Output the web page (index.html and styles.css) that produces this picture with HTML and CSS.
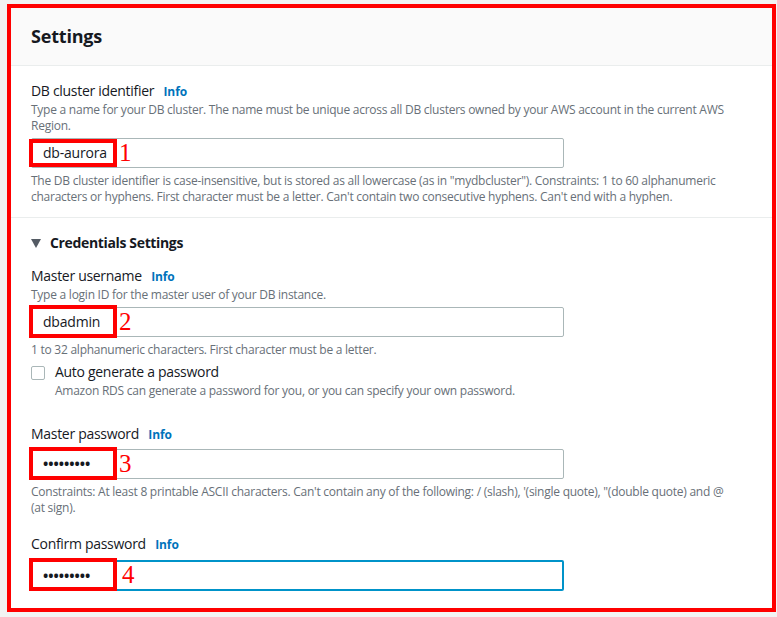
FILE: index.html
```html
<!DOCTYPE html>
<html>
<head>
<meta charset="utf-8">
<link rel="stylesheet" href="styles.css">
</head>
<body>
<div class="frame">
  <div class="card">
    <div class="card-header"><h2 class="title">Settings</h2></div>
    <div class="section">
      <div class="field">
        <div class="label">DB cluster identifier <a class="info">Info</a></div>
        <div class="desc">Type a name for your DB cluster. The name must be unique across all DB clusters owned by your AWS account in the current AWS Region.</div>
        <div class="input-wrap">
          <div class="input">db-aurora</div>
          <div class="mark mark-1"></div>
          <span class="num">1</span>
        </div>
        <div class="hint">The DB cluster identifier is case-insensitive, but is stored as all lowercase (as in "mydbcluster"). Constraints: 1 to 60 alphanumeric characters or hyphens. First character must be a letter. Can't contain two consecutive hyphens. Can't end with a hyphen.</div>
      </div>
    </div>
    <div class="section section-cred">
      <div class="expander">
        <svg class="caret" width="10" height="9" viewBox="0 0 10 9"><polygon points="0,0 10,0 5,9" fill="#545b64"/></svg>
        <span>Credentials Settings</span>
      </div>
      <div class="field">
        <div class="label">Master username <a class="info">Info</a></div>
        <div class="desc">Type a login ID for the master user of your DB instance.</div>
        <div class="input-wrap">
          <div class="input">dbadmin</div>
          <div class="mark"></div>
          <span class="num">2</span>
        </div>
        <div class="hint">1 to 32 alphanumeric characters. First character must be a letter.</div>
      </div>
      <div class="check-row">
        <span class="checkbox"></span>
        <div>
          <div class="check-label">Auto generate a password</div>
          <div class="desc">Amazon RDS can generate a password for you, or you can specify your own password.</div>
        </div>
      </div>
      <div class="field field-pw">
        <div class="label">Master password <a class="info">Info</a></div>
        <div class="input-wrap">
          <div class="input pw">•••••••••</div>
          <div class="mark"></div>
          <span class="num">3</span>
        </div>
        <div class="hint">Constraints: At least 8 printable ASCII characters. Can't contain any of the following: / (slash), '(single quote), "(double quote) and @ <span class="nowrap">(at sign).</span></div>
      </div>
      <div class="field field-confirm">
        <div class="label">Confirm password <a class="info">Info</a></div>
        <div class="input-wrap input-wrap-confirm">
          <div class="input pw focused">•••••••••</div>
          <div class="mark"></div>
          <span class="num num-4">4</span>
        </div>
      </div>
    </div>
  </div>
</div>
</body>
</html>
```

FILE: styles.css
```css
* { box-sizing: border-box; }
html, body { margin: 0; padding: 0; }
body {
  background: #f2f3f3;
  font-family: "Open Sans", "Noto Sans", sans-serif;
  color: #16191f;
  width: 777px;
  height: 617px;
  overflow: hidden;
}
.frame {
  padding: 4px 1px 5px 7px;
}
.card {
  border: 4px solid #ff0000;
  background: #ffffff;
  height: 608px;
}
.card-header {
  background: #fafafa;
  border-bottom: 1px solid #eaeded;
  height: 58px;
  padding: 0 20px;
  display: flex;
  align-items: center;
}
.title {
  margin: 0;
  font-size: 18px;
  font-weight: 700;
  line-height: 22px;
  letter-spacing: -0.2px;
  margin-top: -2px;
}
.section {
  padding: 15px 20px 12px;
  border-bottom: 1px solid #eaeded;
}
.section-cred {
  border-bottom: none;
  padding-top: 15px;
}
.label {
  font-size: 14px;
  line-height: 20px;
  letter-spacing: -0.3px;
  color: #16191f;
}
.info {
  font-size: 12px;
  font-weight: 700;
  color: #0073bb;
  letter-spacing: -0.1px;
  margin-left: 6px;
}
.desc, .hint {
  font-size: 12px;
  line-height: 16px;
  letter-spacing: -0.25px;
  color: #687078;
}
.nowrap { white-space: nowrap; }
.input-wrap {
  position: relative;
  width: 533px;
  margin-top: 4px;
}
.input-wrap-confirm { margin-top: 5px; }
.input {
  height: 30px;
  border: 1px solid #aab7b8;
  border-radius: 2px;
  padding: 0 11px;
  font-size: 14px;
  line-height: 28px;
  letter-spacing: -0.2px;
  color: #16191f;
}
.input.pw {
  font-size: 14px;
  letter-spacing: 0;
  font-weight: 700;
}
.input.focused {
  border: 2px solid #0093c9;
  height: 31px;
  padding-left: 10px;
  line-height: 27px;
}
.hint {
  margin-top: 5px;
}
.mark {
  position: absolute;
  left: -2px;
  top: -2px;
  width: 88px;
  height: 33px;
  border: 4px solid #ff0000;
}
.mark-1 {
  top: 1px;
  height: 28px;
}
.num {
  position: absolute;
  left: 88px;
  top: 0;
  font-family: "Liberation Serif", "DejaVu Serif", serif;
  font-size: 25px;
  line-height: 30px;
  color: #ff0000;
}
.num-4 { left: 91px; }
.expander {
  display: flex;
  align-items: center;
  font-size: 14px;
  font-weight: 700;
  line-height: 20px;
  letter-spacing: -0.35px;
  color: #16191f;
  margin-bottom: 13px;
}
.caret { margin-right: 9px; }
.check-row {
  display: flex;
  margin-top: 4px;
}
.check-row .desc { margin-top: 1px; }
.checkbox {
  width: 14px;
  height: 14px;
  border: 1px solid #aab7b8;
  border-radius: 2px;
  margin-top: 4px;
  margin-right: 10px;
  flex: none;
}
.check-label {
  font-size: 14px;
  line-height: 20px;
  letter-spacing: -0.3px;
}
.field-pw { margin-top: 25px; }
.field-confirm { margin-top: 18px; }
```
